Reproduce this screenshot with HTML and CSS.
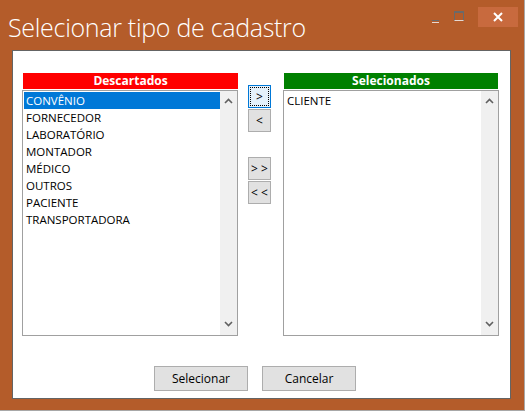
FILE: index.html
```html
<!doctype html>
<html>
<head>
<meta charset="utf-8">
<link rel="stylesheet" href="styles.css">
<title>Selecionar tipo de cadastro</title>
</head>
<body>
<div class="window">
  <div class="titlebar">
    <h1 class="title">Selecionar tipo de cadastro</h1>
    <div class="controls">
      <span class="ctl ctl-min"><i></i></span>
      <span class="ctl ctl-max"><i></i></span>
      <span class="ctl ctl-close">
        <svg width="10" height="10" viewBox="0 0 10 10"><path d="M1 1L9 9M9 1L1 9" stroke="#fff" stroke-width="2"/></svg>
      </span>
    </div>
  </div>
  <div class="panel">
    <div class="lists">
      <div class="column">
        <div class="header header-red">Descartados</div>
        <div class="listbox">
          <ul class="items">
            <li class="selected">CONVÊNIO</li>
            <li>FORNECEDOR</li>
            <li>LABORATÓRIO</li>
            <li>MONTADOR</li>
            <li>MÉDICO</li>
            <li>OUTROS</li>
            <li>PACIENTE</li>
            <li>TRANSPORTADORA</li>
          </ul>
          <div class="scrollbar">
            <svg width="9" height="6" viewBox="0 0 9 6"><path d="M1 5L4.5 1.5L8 5" fill="none" stroke="#606060" stroke-width="1.6"/></svg>
            <svg width="9" height="6" viewBox="0 0 9 6"><path d="M1 1L4.5 4.5L8 1" fill="none" stroke="#606060" stroke-width="1.6"/></svg>
          </div>
        </div>
      </div>
      <div class="movers">
        <button class="btn-sm focused"><span>&gt;</span></button>
        <button class="btn-sm">&lt;</button>
        <button class="btn-sm spaced">&gt; &gt;</button>
        <button class="btn-sm">&lt; &lt;</button>
      </div>
      <div class="column">
        <div class="header header-green">Selecionados</div>
        <div class="listbox">
          <ul class="items">
            <li>CLIENTE</li>
          </ul>
          <div class="scrollbar">
            <svg width="9" height="6" viewBox="0 0 9 6"><path d="M1 5L4.5 1.5L8 5" fill="none" stroke="#606060" stroke-width="1.6"/></svg>
            <svg width="9" height="6" viewBox="0 0 9 6"><path d="M1 1L4.5 4.5L8 1" fill="none" stroke="#606060" stroke-width="1.6"/></svg>
          </div>
        </div>
      </div>
    </div>
    <div class="actions">
      <button class="btn">Selecionar</button>
      <button class="btn">Cancelar</button>
    </div>
  </div>
</div>
</body>
</html>
```

FILE: styles.css
```css
body {
    margin: 0;
    font-family: "Open Sans", "Noto Sans", sans-serif;
    background-color: white;
}
.window {
    width: 524px;
    height: 410px;
    background-color: #b45c2a;
    border-right: 1px solid #a8a8a8;
    border-bottom: 1px solid #a8a8a8;
    display: flex;
    flex-direction: column;
}
.titlebar {
    height: 50px;
    display: flex;
    justify-content: space-between;
}
.title {
    margin: 9px 0 0 8px;
    font-size: 25px;
    font-weight: 300;
    line-height: 36px;
    color: #fff;
    letter-spacing: -0.3px;
}
.controls {
    display: flex;
    align-items: flex-start;
    padding-top: 7px;
    padding-right: 6px;
}
.ctl {
    display: flex;
    align-items: center;
    justify-content: center;
    height: 20px;
}
.ctl-min {
    width: 24px;
}
.ctl-min i {
    display: block;
    width: 7px;
    height: 1px;
    margin-top: 8px;
    border-top: 1px solid #6a6a6a;
    border-bottom: 1px solid #e8d8d0;
}
.ctl-max {
    width: 24px;
}
.ctl-max i {
    display: block;
    width: 8px;
    height: 7px;
    margin-top: -2px;
    border: 1px solid #6a6a6a;
    border-top-width: 2px;
    border-bottom-color: #e8d8d0;
}
.ctl-close {
    width: 40px;
    margin-left: 7px;
    background-color: #c86a3e;
}
.panel {
    margin: 0 13px 11px 12px;
    flex: 1;
    background-color: #fff;
    border: 1px solid #646464;
    padding: 22px 0 0 9px;
}
.lists {
    display: flex;
}
.column {
    width: 216px;
}
.header {
    height: 16px;
    margin: 0 1px 1px 1px;
    color: #fff;
    font-weight: bold;
    font-size: 12px;
    line-height: 16px;
    text-align: center;
}
.header-red {
    background-color: #ff0000;
    margin-right: 0;
}
.header-green {
    background-color: #008000;
}
.listbox {
    height: 244px;
    border: 1px solid #a0a0a0;
    display: flex;
    justify-content: space-between;
}
.items {
    list-style: none;
    margin: 1px 0 0 1px;
    padding: 0;
    flex: 1;
    font-size: 11.5px;
    line-height: 17px;
    color: #000;
}
.items li {
    padding-left: 2px;
    height: 17px;
}
.items li.selected {
    background-color: #0078d7;
    color: #fff;
}
.scrollbar {
    width: 17px;
    background-color: #f0f0f0;
    display: flex;
    flex-direction: column;
    justify-content: space-between;
    align-items: center;
    padding: 7px 0 8px;
}
.movers {
    width: 23px;
    margin: 12px 12px 0 10px;
    display: flex;
    flex-direction: column;
    gap: 1px;
}
.btn-sm {
    width: 23px;
    height: 23px;
    padding: 0;
    background-color: #e1e1e1;
    border: 1px solid #adadad;
    font-family: inherit;
    font-size: 12px;
    color: #000;
    white-space: nowrap;
}
.btn-sm.focused {
    background-color: #e5f1fb;
    border-color: #0078d7;
    padding: 1px;
}
.btn-sm.focused span {
    display: block;
    height: 17px;
    line-height: 17px;
    border: 1px dotted #000;
}
.btn-sm.spaced {
    margin-top: 24px;
}
.actions {
    display: flex;
    gap: 14px;
    margin: 30px 0 0 132px;
}
.btn {
    width: 94px;
    height: 25px;
    background-color: #e1e1e1;
    border: 1px solid #adadad;
    font-family: inherit;
    font-size: 12px;
    color: #000;
}
```
